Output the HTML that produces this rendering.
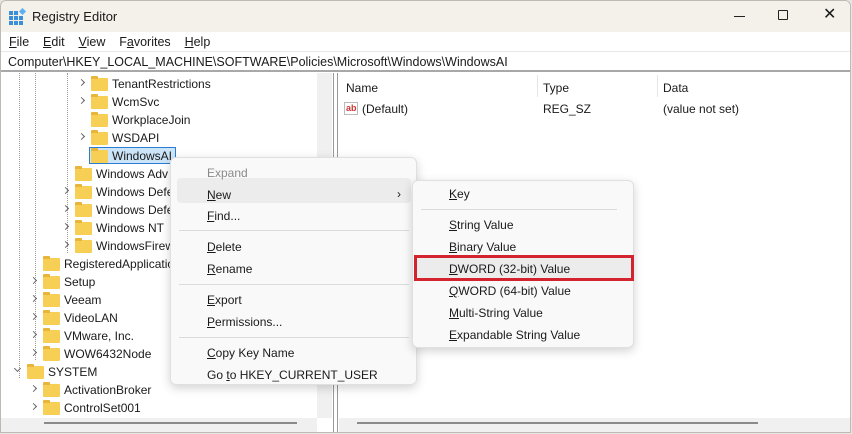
<!DOCTYPE html>
<html><head><meta charset="utf-8"><style>
*{margin:0;padding:0;box-sizing:border-box}
body{width:852px;height:434px;overflow:hidden;background:#e8e6e3;font-family:"Liberation Sans",sans-serif;font-size:12px;color:#1a1a1a;position:relative}
.a{position:absolute;white-space:nowrap}
.win{position:absolute;left:0;top:0;width:851px;height:433px;background:#fff;border:1px solid #bdbab6;border-radius:6px 6px 0 0;overflow:hidden}
.title{position:absolute;left:0;top:0;width:100%;height:31px;background:#f4f0ea}
.fold{position:absolute;width:17px;height:13px;background:#f7cf55;border-radius:1px}
.fold:before{content:"";position:absolute;left:0;top:-2px;width:7px;height:3px;background:#e9b43a;border-radius:1px 1px 0 0}
.chev{position:absolute;width:5px;height:5px;border-right:1.2px solid #666;border-bottom:1.2px solid #666;transform:rotate(-45deg)}
.menu{position:absolute;background:#f9f9f9;border:1px solid #e0e0e0;border-radius:6px;box-shadow:0 3px 10px rgba(0,0,0,.18)}
.sep{position:absolute;height:1px;background:#dcdcdc}
u{text-decoration:underline}
</style></head><body>
<div class="win">
<div class="title"></div>
<svg class="a" style="left:8px;top:7px" width="18" height="18"><rect x="0" y="3" width="4" height="4" fill="#3b8ed8"/><rect x="5" y="3" width="4" height="4" fill="#3b8ed8"/><rect x="0" y="8" width="4" height="4" fill="#3b8ed8"/><rect x="5" y="8" width="4" height="4" fill="#3b8ed8"/><rect x="10" y="8" width="4" height="4" fill="#3b8ed8"/><rect x="0" y="13" width="4" height="4" fill="#3b8ed8"/><rect x="5" y="13" width="4" height="4" fill="#3b8ed8"/><rect x="10" y="13" width="4" height="4" fill="#3b8ed8"/><rect x="11" y="1" width="5" height="5" fill="#5bb0f0" transform="rotate(45 13.5 3.5)"/></svg>
<div class="a" style="left:31px;top:8px;font-size:13px">Registry Editor</div>
<div class="a" style="left:733px;top:15px;width:11px;height:1px;background:#222"></div>
<div class="a" style="left:777px;top:9px;width:10px;height:10px;border:1px solid #222;border-radius:1px"></div>
<div class="a" style="left:822px;top:6px;font-size:16px;line-height:16px">✕</div>
<div class="a" style="left:8px;top:34px;font-size:12.5px"><u>F</u>ile&nbsp;&nbsp;&nbsp; <u>E</u>dit&nbsp;&nbsp;&nbsp; <u>V</u>iew&nbsp;&nbsp;&nbsp; F<u>a</u>vorites&nbsp;&nbsp;&nbsp; <u>H</u>elp</div>
<div class="a" style="left:0;top:50px;width:851px;height:21px;border-top:1px solid #e8e8e8;border-bottom:2px solid #a8a8a8"></div>
<div class="a" style="left:7px;top:54px;font-size:12.5px">Computer\HKEY_LOCAL_MACHINE\SOFTWARE\Policies\Microsoft\Windows\WindowsAI</div>
<div class="a" style="left:316px;top:72px;width:15px;height:345px;background:#f0f0f0"></div>
<div class="a" style="left:332px;top:72px;width:5px;height:361px;border-left:1px solid #999;border-right:1px solid #999;background:#fff"></div>
<div class="a" style="left:0;top:417px;width:316px;height:16px;background:#f0f0f0"></div>
<div class="a" style="left:43px;top:421px;width:253px;height:2px;background:#8a8a8a"></div>
<div class="a" style="left:338px;top:417px;width:512px;height:16px;background:#f0f0f0"></div>
<div class="a" style="left:356px;top:421px;width:401px;height:2px;background:#8a8a8a"></div>
<div class="a" style="left:18px;top:72px;height:305px;border-left:1px dotted #999"></div>
<div class="a" style="left:34px;top:72px;height:287px;border-left:1px dotted #999"></div>
<div class="a" style="left:66px;top:72px;height:180px;border-left:1px dotted #999"></div>
<!-- right pane -->
<div class="a" style="left:345px;top:80px">Name</div>
<div class="a" style="left:542px;top:80px">Type</div>
<div class="a" style="left:662px;top:80px">Data</div>
<div class="a" style="left:536px;top:74px;width:1px;height:22px;background:#e5e5e5"></div>
<div class="a" style="left:656px;top:74px;width:1px;height:22px;background:#e5e5e5"></div>
<div class="a" style="left:343px;top:101px;width:14px;height:13px;border:1px solid #bbb;background:#fff;font-size:9px;color:#c33;font-weight:bold;line-height:10px;padding-left:1px">ab</div>
<div class="a" style="left:361px;top:101px">(Default)</div>
<div class="a" style="left:542px;top:101px">REG_SZ</div>
<div class="a" style="left:662px;top:101px">(value not set)</div>
<!-- tree -->
<div id="tree"></div>
<div class="chev" style="left:78px;top:79px"></div><div class="fold" style="left:90px;top:77px"></div><div class="a" style="left:111px;top:76px">TenantRestrictions</div>
<div class="chev" style="left:78px;top:97px"></div><div class="fold" style="left:90px;top:95px"></div><div class="a" style="left:111px;top:94px">WcmSvc</div>
<div class="fold" style="left:90px;top:113px"></div><div class="a" style="left:111px;top:112px">WorkplaceJoin</div>
<div class="chev" style="left:78px;top:133px"></div><div class="fold" style="left:90px;top:131px"></div><div class="a" style="left:111px;top:130px">WSDAPI</div>
<div class="a" style="left:88px;top:146px;width:87px;height:17px;border:1px solid #2a7dd0;background:#cce4f7"></div>
<div class="fold" style="left:90px;top:149px"></div><div class="a" style="left:111px;top:148px">WindowsAI</div>
<div class="fold" style="left:74px;top:167px"></div><div class="a" style="left:95px;top:166px">Windows Adv</div>
<div class="chev" style="left:62px;top:187px"></div><div class="fold" style="left:74px;top:185px"></div><div class="a" style="left:95px;top:184px">Windows Defe</div>
<div class="chev" style="left:62px;top:205px"></div><div class="fold" style="left:74px;top:203px"></div><div class="a" style="left:95px;top:202px">Windows Defe</div>
<div class="chev" style="left:62px;top:223px"></div><div class="fold" style="left:74px;top:221px"></div><div class="a" style="left:95px;top:220px">Windows NT</div>
<div class="chev" style="left:62px;top:241px"></div><div class="fold" style="left:74px;top:239px"></div><div class="a" style="left:95px;top:238px">WindowsFirew</div>
<div class="fold" style="left:42px;top:257px"></div><div class="a" style="left:63px;top:256px">RegisteredApplications</div>
<div class="chev" style="left:30px;top:277px"></div><div class="fold" style="left:42px;top:275px"></div><div class="a" style="left:63px;top:274px">Setup</div>
<div class="chev" style="left:30px;top:295px"></div><div class="fold" style="left:42px;top:293px"></div><div class="a" style="left:63px;top:292px">Veeam</div>
<div class="chev" style="left:30px;top:313px"></div><div class="fold" style="left:42px;top:311px"></div><div class="a" style="left:63px;top:310px">VideoLAN</div>
<div class="chev" style="left:30px;top:331px"></div><div class="fold" style="left:42px;top:329px"></div><div class="a" style="left:63px;top:328px">VMware, Inc.</div>
<div class="chev" style="left:30px;top:349px"></div><div class="fold" style="left:42px;top:347px"></div><div class="a" style="left:63px;top:346px">WOW6432Node</div>
<div class="chev" style="left:14px;top:365px;transform:rotate(45deg)"></div><div class="fold" style="left:26px;top:365px"></div><div class="a" style="left:47px;top:364px">SYSTEM</div>
<div class="chev" style="left:30px;top:385px"></div><div class="fold" style="left:42px;top:383px"></div><div class="a" style="left:63px;top:382px">ActivationBroker</div>
<div class="chev" style="left:30px;top:403px"></div><div class="fold" style="left:42px;top:401px"></div><div class="a" style="left:63px;top:400px">ControlSet001</div>
</div>
<!-- context menu -->
<div class="menu" style="left:170px;top:157px;width:247px;height:228px">
<div class="a" style="left:6px;top:20px;width:234px;height:25px;background:#ececec;border-radius:4px"></div>
<div class="a" style="left:36px;top:8px;color:#8a8a8a">Expand</div>
<div class="a" style="left:36px;top:30px"><u>N</u>ew</div>
<div class="a" style="left:226px;top:29px">›</div>
<div class="a" style="left:36px;top:51px"><u>F</u>ind...</div>
<div class="sep" style="left:8px;top:72px;width:230px"></div>
<div class="a" style="left:36px;top:82px"><u>D</u>elete</div>
<div class="a" style="left:36px;top:104px"><u>R</u>ename</div>
<div class="sep" style="left:8px;top:126px;width:230px"></div>
<div class="a" style="left:36px;top:135px"><u>E</u>xport</div>
<div class="a" style="left:36px;top:157px"><u>P</u>ermissions...</div>
<div class="sep" style="left:8px;top:179px;width:230px"></div>
<div class="a" style="left:36px;top:188px"><u>C</u>opy Key Name</div>
<div class="a" style="left:36px;top:210px">Go <u>t</u>o HKEY_CURRENT_USER</div>
</div>
<!-- submenu -->
<div class="menu" style="left:412px;top:180px;width:222px;height:168px">
<div class="a" style="left:36px;top:6px"><u>K</u>ey</div>
<div class="sep" style="left:8px;top:28px;width:196px"></div>
<div class="a" style="left:36px;top:37px"><u>S</u>tring Value</div>
<div class="a" style="left:36px;top:59px"><u>B</u>inary Value</div>
<div class="a" style="left:1px;top:74px;width:220px;height:26px;background:#ececec;border:3px solid #d2232f"></div>
<div class="a" style="left:36px;top:81px"><u>D</u>WORD (32-bit) Value</div>
<div class="a" style="left:36px;top:103px"><u>Q</u>WORD (64-bit) Value</div>
<div class="a" style="left:36px;top:125px"><u>M</u>ulti-String Value</div>
<div class="a" style="left:36px;top:147px"><u>E</u>xpandable String Value</div>
</div>
</body></html>
